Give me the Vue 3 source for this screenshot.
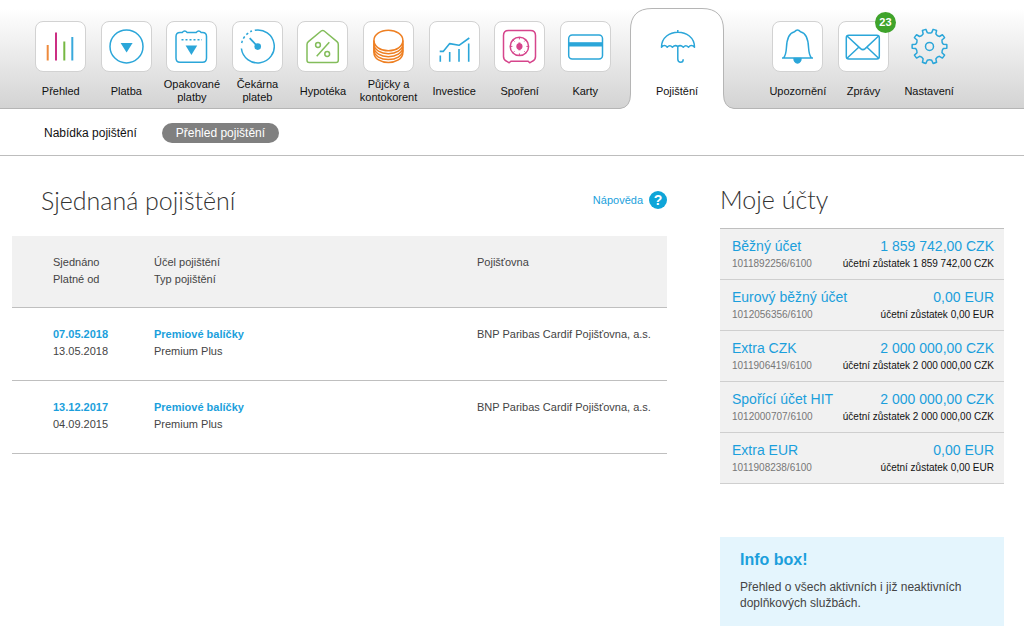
<script setup>
const blue = '#2ba6d9'
const p = (d, extra = {}) => ['path', { d, ...extra }]
const c = (cx, cy, r, extra = {}) => ['circle', { cx, cy, r, ...extra }]
const solid = { fill: 'currentColor', stroke: 'none' }

function gearPath(cx, cy, outer, inner, teeth) {
  const at = (r, deg) => {
    const a = (deg * Math.PI) / 180
    return `${(cx + r * Math.cos(a)).toFixed(2)} ${(cy + r * Math.sin(a)).toFixed(2)}`
  }
  const step = 360 / teeth
  let d = ''
  for (let i = 0; i < teeth; i++) {
    const m = i * step
    d += `${i ? 'L' : 'M'}${at(inner, m - 9)}L${at(outer, m - 6)}A${outer} ${outer} 0 0 1 ${at(outer, m + 6)}L${at(inner, m + 9)}Q${at(inner - 1.2, m + step / 2)} ${at(inner, m + step - 9)}`
  }
  return d + 'Z'
}

const safeTicks = Array.from({ length: 8 }, (_, i) => {
  const a = (i * Math.PI) / 4
  const x = Math.cos(a), y = Math.sin(a)
  return `M${(25.4 + x * 9).toFixed(1)} ${(25.4 + y * 9).toFixed(1)}L${(25.4 + x * 7).toFixed(1)} ${(25.4 + y * 7).toFixed(1)}`
}).join('')

const main = [
  { label: 'Přehled', color: blue, shapes: [
    p('M12.7 24V39.5', { stroke: '#ee8a3c', 'stroke-width': 2 }),
    p('M21 11.5V39.5', { stroke: '#cc2f83', 'stroke-width': 2 }),
    p('M29.3 20.5V39.5', { stroke: '#76b843', 'stroke-width': 2 }),
    p('M37.3 16V39.5', { stroke: '#39a9dc', 'stroke-width': 2 })] },
  { label: 'Platba', color: blue, shapes: [
    c(25.5, 25.4, 16.5), p('M19.6 22H31.6L25.6 31.4Z', solid)] },
  { label: 'Opakované platby', color: blue, shapes: [
    p('M14 11.5H16.2Q18.7 8.6 21.2 11.5H30.2Q32.7 8.6 35.2 11.5H36.5Q40.5 11.5 40.5 15.5V37Q40.5 41.3 36.5 41.3H14Q10 41.3 10 37V15.5Q10 11.5 14 11.5Z'),
    p('M15.5 18.8H36', { 'stroke-dasharray': '2 2' }),
    p('M19.6 24.6H31.2L25.4 34Z', solid)] },
  { label: 'Čekárna plateb', color: blue, shapes: [
    p('M22.8 9.2A16.5 16.5 0 1 1 9.4 27.5'),
    p('M9.7 22A16.5 16.5 0 0 1 20 10', { 'stroke-dasharray': '2.4 2.4' }),
    p('M17.7 17.2L25.7 25.6', { 'stroke-width': 1.8 }), c(25.7, 25.6, 3.3, solid)] },
  { label: 'Hypotéka', color: '#83bd5b', shapes: [
    p('M24.2 10Q25.7 8.8 27.2 10L40 20.6Q41.3 21.8 41.3 23.5V39.3Q41.3 41.6 39 41.6H12.3Q10 41.6 10 39.3V23.5Q10 21.8 11.4 20.6Z'),
    p('M19.7 35.2L32.3 21.2'), c(21, 24, 2.4), c(30.2, 33, 2.4)] },
  { label: 'Půjčky a kontokorent', color: '#ee7f22', shapes: [
    ['ellipse', { cx: 25.4, cy: 19.5, rx: 14.5, ry: 10.3 }],
    p('M10.9 19.5V31.2C10.9 44.9 39.9 44.9 39.9 31.2V19.5'),
    p('M10.9 22.5C10.9 36 39.9 36 39.9 22.5M10.9 25.5C10.9 39 39.9 39 39.9 25.5M10.9 28.4C10.9 42 39.9 42 39.9 28.4')] },
  { label: 'Investice', color: blue, shapes: [
    p('M10.7 30.4H14.2L20.7 22.6L30 24.3L40.3 17', { 'stroke-width': 1.6 }),
    p('M11.3 34.5V40.8M20.7 31V40.8M30 28V40.8M39.7 22.5V40.8', { 'stroke-width': 1.6 })] },
  { label: 'Spoření', color: '#d6458c', shapes: [
    p('M14.5 9.5H36.5Q41.5 9.5 41.5 14.5V35.5Q41.5 39 38.5 40.2L35.7 41.8L34.2 40.2H16.8L15.2 41.8L12.5 40.2Q9.5 39 9.5 35.5V14.5Q9.5 9.5 14.5 9.5Z'),
    c(25.4, 25.4, 9.2), p(safeTicks, { 'stroke-width': 1 }),
    c(25.4, 25.4, 3.1, solid), p('M25.4 21.5V29.3', { 'stroke-width': 2 })] },
  { label: 'Karty', color: blue, shapes: [
    ['rect', { x: 8.7, y: 14, width: 33.8, height: 24, rx: 3.5 }],
    ['rect', { x: 9, y: 21.2, width: 33.2, height: 4.3, ...solid }]] },
]

const umbrella = [
  p('M25.8 9V11.2M9.5 26.2C9.5 6.3 42.5 6.3 42.5 26.2Q39.2 23 36.5 26.2Q33.8 23.2 31.3 26.2Q28.5 23.4 25.8 25.5Q23.2 23.4 20.4 26.2Q17.8 23.2 15.2 26.2Q12.6 23 9.5 26.2Z'),
  p('M25.8 25.5V38.2Q26 41.3 28.7 41.3Q31.2 41.3 31.2 38.2'),
]

const tools = [
  { label: 'Upozornění', tile: true, shapes: [
    p('M10 37H41M11.5 37Q14 34 14.4 27C14.8 17 17 12 22.5 10.8Q25.5 7 28.5 10.8C34 12 36.2 17 36.6 27Q37 34 39.5 37'),
    p('M22 37.5H29A3.5 4.4 0 0 1 22 37.5Z', { fill: 'currentColor' })] },
  { label: 'Zprávy', tile: true, badge: '23', shapes: [
    ['rect', { x: 8.3, y: 14.2, width: 33, height: 23.8, rx: 2.5 }],
    p('M9 15L22.6 27.6Q24.9 29.6 27.2 27.6L40.6 15M9 37.2L20.7 26.2M40.6 37.2L29 26.2')] },
  { label: 'Nastavení', tile: false, shapes: [
    p(gearPath(25.5, 25.4, 17.4, 14, 10)), c(25.5, 25.4, 4)] },
]

const policies = [
  { signed: '07.05.2018', valid: '13.05.2018', purpose: 'Premiové balíčky', type: 'Premium Plus', insurer: 'BNP Paribas Cardif Pojišťovna, a.s.' },
  { signed: '13.12.2017', valid: '04.09.2015', purpose: 'Premiové balíčky', type: 'Premium Plus', insurer: 'BNP Paribas Cardif Pojišťovna, a.s.' },
]

const accounts = [
  { name: 'Běžný účet', number: '1011892256/6100', amount: '1 859 742,00 CZK' },
  { name: 'Eurový běžný účet', number: '1012056356/6100', amount: '0,00 EUR' },
  { name: 'Extra CZK', number: '1011906419/6100', amount: '2 000 000,00 CZK' },
  { name: 'Spořící účet HIT', number: '1012000707/6100', amount: '2 000 000,00 CZK' },
  { name: 'Extra EUR', number: '1011908238/6100', amount: '0,00 EUR' },
]
</script>

<template>
  <div class="page">
    <header class="top">
      <nav class="group main-nav" aria-label="Hlavní">
        <a v-for="item in main" :key="item.label" href="#" class="item">
          <span class="tile" :style="{ color: item.color }">
            <svg class="icon" viewBox="1 1 49 49" aria-hidden="true">
              <component :is="s[0]" v-for="(s, i) in item.shapes" :key="i" v-bind="s[1]" />
            </svg>
          </span>
          <span class="label">{{ item.label }}</span>
        </a>
      </nav>
      <a href="#" class="item tab" aria-current="page">
        <svg class="tab-shape" viewBox="0 0 114 101" aria-hidden="true">
          <path class="tab-fill" d="M0 101V100.5Q10.5 99.5 10.5 86V22Q10.5 .5 32 .5H82Q103.5 .5 103.5 22V86Q103.5 99.5 114 100.5V101Z" />
          <path class="tab-line" d="M0 100.5Q10.5 99.5 10.5 86V22Q10.5 .5 32 .5H82Q103.5 .5 103.5 22V86Q103.5 99.5 114 100.5" />
        </svg>
        <span class="tile bare">
          <svg class="icon" viewBox="1 1 49 49" aria-hidden="true">
            <component :is="s[0]" v-for="(s, i) in umbrella" :key="i" v-bind="s[1]" />
          </svg>
        </span>
        <span class="label">Pojištění</span>
      </a>
      <nav class="group tools" aria-label="Nástroje">
        <a v-for="item in tools" :key="item.label" href="#" class="item">
          <span class="tile" :class="{ bare: !item.tile }">
            <svg class="icon" viewBox="1 1 49 49" aria-hidden="true">
              <component :is="s[0]" v-for="(s, i) in item.shapes" :key="i" v-bind="s[1]" />
            </svg>
            <span v-if="item.badge" class="badge">{{ item.badge }}</span>
          </span>
          <span class="label">{{ item.label }}</span>
        </a>
      </nav>
    </header>

    <nav class="subnav" aria-label="Pojištění">
      <a href="#">Nabídka pojištění</a>
      <a href="#" class="current">Přehled pojištění</a>
    </nav>

    <div class="content">
      <main>
        <div class="heading">
          <h1>Sjednaná pojištění</h1>
          <a href="#" class="help">Nápověda <span class="q">?</span></a>
        </div>
        <table>
          <colgroup><col class="c1" /><col class="c2" /><col /></colgroup>
          <thead>
            <tr>
              <th>Sjednáno<br />Platné od</th>
              <th>Účel pojištění<br />Typ pojištění</th>
              <th>Pojišťovna</th>
            </tr>
          </thead>
          <tbody>
            <tr v-for="row in policies" :key="row.signed">
              <td><a href="#">{{ row.signed }}</a><br />{{ row.valid }}</td>
              <td><a href="#">{{ row.purpose }}</a><br />{{ row.type }}</td>
              <td>{{ row.insurer }}</td>
            </tr>
          </tbody>
        </table>
      </main>

      <aside>
        <h2>Moje účty</h2>
        <ul class="accounts">
          <li v-for="a in accounts" :key="a.number">
            <div class="line big"><a href="#">{{ a.name }}</a><span>{{ a.amount }}</span></div>
            <div class="line small"><span class="number">{{ a.number }}</span><span>účetní zůstatek {{ a.amount }}</span></div>
          </li>
        </ul>
        <section class="info">
          <h3>Info box!</h3>
          <p>Přehled o všech aktivních i již neaktivních doplňkových službách.</p>
        </section>
      </aside>
    </div>
  </div>
</template>

<style>
body { margin: 0; background: #fff; }
</style>

<style scoped>
.page { font-family: "Liberation Sans", Arial, sans-serif; font-size: 11px; color: #444; }
a { color: #1b9fdc; text-decoration: none; }
h1, h2, h3, p, ul { margin: 0; padding: 0; }

.top {
  display: flex;
  align-items: flex-start;
  box-sizing: border-box;
  height: 109px;
  padding-left: 28px;
  border-bottom: 1px solid #b5b5b5;
  background: linear-gradient(#fff 8%, #f0f0f0 40%, #d3d3d3);
}
.group { display: grid; grid-auto-flow: column; grid-auto-columns: 1fr; }
.main-nav { width: 590px; }
.tools { width: 197px; margin-left: 41px; }
.item {
  display: flex;
  flex-direction: column;
  align-items: center;
  gap: 5px;
  padding-top: 21px;
  color: #111;
}
.tile {
  position: relative;
  box-sizing: border-box;
  width: 51px;
  height: 51px;
  border: 1px solid #d2d2d2;
  border-radius: 8px;
  background: #fff;
  color: #2ba6d9;
}
.bare { border-color: transparent; background: none; }
.icon {
  display: block;
  width: 49px;
  height: 49px;
  fill: none;
  stroke: currentColor;
  stroke-width: 1.5;
  stroke-linejoin: round;
}
.label {
  display: flex;
  align-items: center;
  justify-content: center;
  height: 28px;
  line-height: 13px;
  text-align: center;
}
.badge {
  position: absolute;
  top: -10px;
  right: -8px;
  width: 21px;
  height: 21px;
  border-radius: 50%;
  background: #3fa32b;
  color: #fff;
  font-weight: bold;
  line-height: 21px;
  text-align: center;
}
.tab { position: relative; width: 94px; margin-left: 12px; }
.tab-shape { position: absolute; top: 8px; left: -10px; width: 114px; height: 101px; }
.tab-fill { fill: #fff; }
.tab-line { fill: none; stroke: #b5b5b5; }
.tab .label { position: relative; }

.subnav {
  display: flex;
  align-items: center;
  gap: 25px;
  box-sizing: border-box;
  height: 47px;
  padding: 2px 0 0 44px;
  border-bottom: 1px solid #bdbdbd;
  font-size: 12px;
  line-height: 20px;
}
.subnav a { color: #111; }
.subnav .current { padding: 0 14px; border-radius: 10px; background: #808080; color: #fff; }

.content {
  display: grid;
  grid-template-columns: minmax(0, 1fr) 284px;
  gap: 53px;
  padding: 27px 20px 14px 12px;
}
.heading { display: flex; align-items: center; justify-content: space-between; height: 34px; padding-left: 29px; margin-bottom: 19px; }
h1, h2 { font-family: Lato, sans-serif; font-size: 25px; font-weight: 300; line-height: 32px; color: #333; }
.help { display: flex; align-items: center; gap: 6px; }
.q {
  width: 18px;
  height: 18px;
  border-radius: 50%;
  background: #0fa5d8;
  color: #fff;
  font-size: 14px;
  font-weight: bold;
  line-height: 18px;
  text-align: center;
}

table { width: 100%; border-collapse: collapse; table-layout: fixed; line-height: 17px; }
.c1 { width: 142px; }
.c2 { width: 323px; }
th, td { padding: 18px 0 20px; text-align: left; vertical-align: top; font-weight: normal; }
th { padding-bottom: 19px; }
th:first-child, td:first-child { padding-left: 41px; }
thead { background: #f1f1f1; }
tr { border-bottom: 1px solid #bfbfbf; }
td a { font-weight: bold; }

h2 { height: 34px; margin-bottom: 11px; }
.accounts { list-style: none; border-top: 1px solid #bfbfbf; background: #f1f1f1; }
.accounts li { padding: 7px 10px 7px 12px; border-bottom: 1px solid #cfcfcf; }
.line { display: flex; justify-content: space-between; white-space: nowrap; }
.big { font-size: 14px; line-height: 20px; color: #1b9fdc; }
.small { font-size: 10px; line-height: 16px; color: #111; }
.number { color: #777; }

.info { margin-top: 53px; padding: 13px 20px 15px; background: #e4f5fd; }
.info h3 { margin-bottom: 9px; font-size: 16px; line-height: 20px; color: #1b9fdc; }
.info p { font-size: 12px; line-height: 16px; }
</style>
